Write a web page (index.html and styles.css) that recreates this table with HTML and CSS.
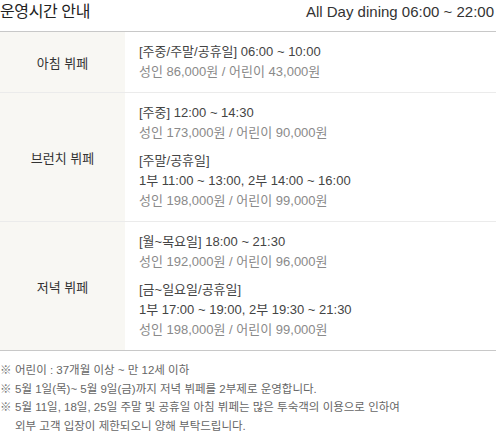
FILE: index.html
```html
<!DOCTYPE html>
<html lang="ko">
<head>
<meta charset="utf-8">
<link rel="stylesheet" href="styles.css">
</head>
<body>
<div class="page">
  <div class="head">
    <h2 class="title">운영시간 안내</h2>
    <div class="allday">All Day dining 06:00 ~ 22:00</div>
  </div>
  <div class="table">
    <div class="row row-short">
      <div class="name">아침 뷔페</div>
      <div class="info">
        <div class="block">
          <div class="time">[주중/주말/공휴일] 06:00 ~ 10:00</div>
          <div class="price">성인 86,000원 / 어린이 43,000원</div>
        </div>
      </div>
    </div>
    <div class="row">
      <div class="name">브런치 뷔페</div>
      <div class="info">
        <div class="block">
          <div class="time">[주중] 12:00 ~ 14:30</div>
          <div class="price">성인 173,000원 / 어린이 90,000원</div>
        </div>
        <div class="block">
          <div class="time">[주말/공휴일]</div>
          <div class="time">1부 11:00 ~ 13:00, 2부 14:00 ~ 16:00</div>
          <div class="price">성인 198,000원 / 어린이 99,000원</div>
        </div>
      </div>
    </div>
    <div class="row">
      <div class="name">저녁 뷔페</div>
      <div class="info">
        <div class="block">
          <div class="time">[월~목요일] 18:00 ~ 21:30</div>
          <div class="price">성인 192,000원 / 어린이 96,000원</div>
        </div>
        <div class="block">
          <div class="time">[금~일요일/공휴일]</div>
          <div class="time">1부 17:00 ~ 19:00, 2부 19:30 ~ 21:30</div>
          <div class="price">성인 198,000원 / 어린이 99,000원</div>
        </div>
      </div>
    </div>
  </div>
  <ul class="notes">
    <li>어린이 : 37개월 이상 ~ 만 12세 이하</li>
    <li>5월 1일(목)~ 5월 9일(금)까지 저녁 뷔페를 2부제로 운영합니다.</li>
    <li>5월 11일, 18일, 25일 주말 및 공휴일 아침 뷔페는 많은 투숙객의 이용으로 인하여<br>외부 고객 입장이 제한되오니 양해 부탁드립니다.</li>
  </ul>
</div>
</body>
</html>
```
FILE: styles.css
```css
* { box-sizing: border-box; }
html, body { margin: 0; padding: 0; background: #fff; }
body {
  font-family: "Liberation Sans", "Noto Sans CJK KR", sans-serif;
  color: #333;
}
.page { width: 496px; }
.head {
  display: flex;
  justify-content: space-between;
  align-items: center;
  height: 31px;
  padding-bottom: 7px;
}
.title {
  margin: 0;
  font-size: 16px;
  font-weight: normal;
  color: #222;
  line-height: 24px;
  letter-spacing: -0.4px;
}
.allday {
  font-size: 15px;
  color: #333;
  line-height: 24px;
  padding-right: 2px;
}
.table {
  border-top: 1px solid #c8c8c8;
  border-bottom: 1px solid #c8c8c8;
}
.row {
  display: flex;
  border-top: 1px solid #ebebeb;
}
.row:first-child { border-top: none; }
.name {
  width: 125px;
  flex: none;
  background: #f8f7f3;
  display: flex;
  align-items: center;
  justify-content: center;
  font-size: 13px;
  color: #333;
}
.info {
  flex: 1;
  padding: 10px 0 10px 14px;
  display: flex;
  flex-direction: column;
  gap: 8px;
}
.time, .price {
  font-size: 13px;
  line-height: 20px;
}
.time { color: #444; }
.price { color: #8a8a8a; }
.notes {
  list-style: none;
  margin: 10px 0 0 0;
  padding: 0;
}
.notes li {
  position: relative;
  padding-left: 15px;
  font-size: 11.5px;
  line-height: 18.5px;
  color: #666;
}
.notes li::before {
  content: "※";
  position: absolute;
  left: 0;
  top: 0;
  color: #777;
}
```
